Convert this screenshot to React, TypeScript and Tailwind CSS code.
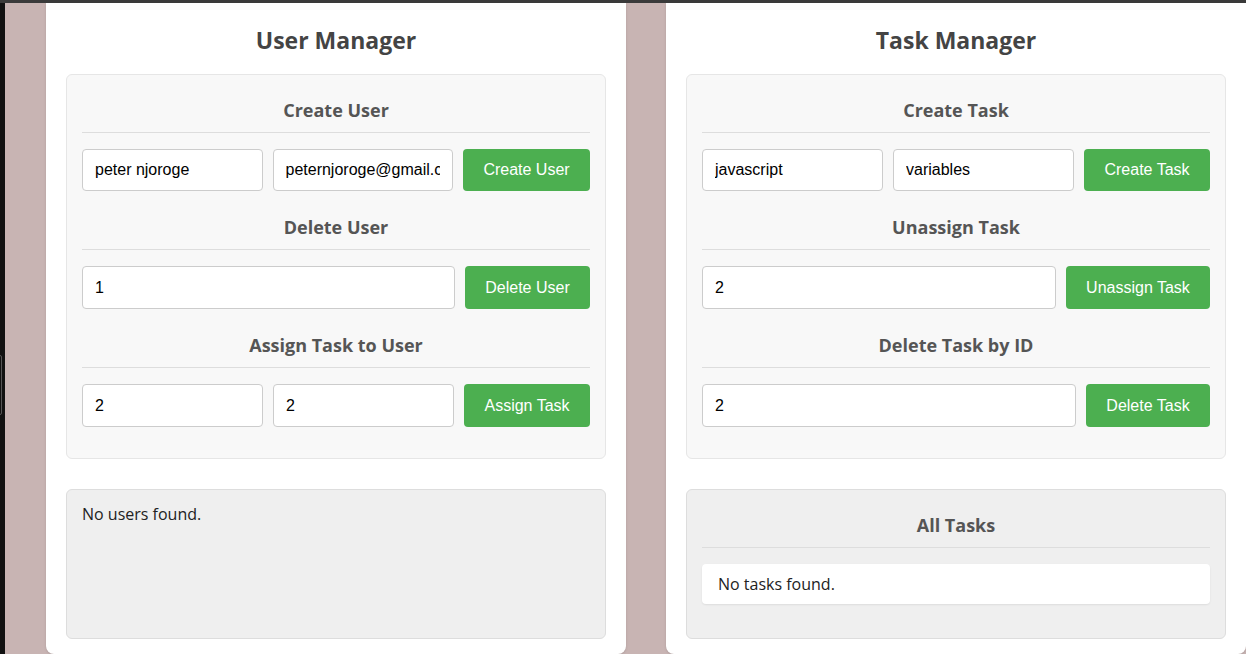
import React, { useState } from 'react';

const headingFont = "font-['Open_Sans','Noto_Sans',sans-serif]";

const inputClass =
  "min-w-0 flex-1 px-3 bg-white border border-[#ccc] rounded-[4px] text-[16px] leading-[18px] text-black outline-none";
const buttonClass =
  "shrink-0 px-5 bg-[#4caf50] text-white text-[16px] rounded-[4px]";

const SectionTitle: React.FC<{ children: React.ReactNode }> = ({ children }) => (
  <h3 className={`pt-2 mb-4 pb-[10px] border-b border-[#ddd] text-center text-[18px] leading-6 font-bold text-[#555] ${headingFont}`}>
    {children}
  </h3>
);

const Section: React.FC<{ title: string; children: React.ReactNode }> = ({ title, children }) => (
  <div className="pb-4 last:pb-0">
    <SectionTitle>{title}</SectionTitle>
    <div className="flex gap-[10px] items-stretch">{children}</div>
  </div>
);

const Card: React.FC<{ title: string; children: React.ReactNode }> = ({ title, children }) => (
  <div className="w-[580px] shrink-0 bg-white rounded-b-[8px] pt-[21px] px-5 pb-[15px] shadow-sm">
    <h2 className={`text-center text-[23px] leading-8 font-bold text-[#444] mb-[18px] ${headingFont}`}>
      {title}
    </h2>
    {children}
  </div>
);

const App: React.FC = () => {
  const [userName, setUserName] = useState('peter njoroge');
  const [userEmail, setUserEmail] = useState('peternjoroge@gmail.com');
  const [deleteUserId, setDeleteUserId] = useState('1');
  const [assignUserId, setAssignUserId] = useState('2');
  const [assignTaskId, setAssignTaskId] = useState('2');
  const [taskTitle, setTaskTitle] = useState('javascript');
  const [taskDesc, setTaskDesc] = useState('variables');
  const [unassignId, setUnassignId] = useState('2');
  const [deleteTaskId, setDeleteTaskId] = useState('2');

  return (
    <div className="h-screen flex flex-col overflow-hidden font-['Liberation_Sans',Arial,sans-serif]">
      <div className="h-[3px] bg-[#3a3a3a] shrink-0" />
      <div className="flex flex-1 min-h-0">
        <div className="relative w-[5px] bg-[#111] shrink-0">
          <div className="absolute left-[-2px] top-[352px] w-[4px] h-[60px] rounded-[3px] border border-[#555]" />
        </div>
        <div className="flex-1 bg-[#c8b4b3] pl-[41px] flex gap-10 items-start overflow-hidden">
          <Card title="User Manager">
            <div className="bg-[#f8f8f8] border border-[#e6e6e6] rounded-[6px] p-[15px] pb-[31px]">
              <Section title="Create User">
                <input className={`${inputClass} h-[42px]`} value={userName} onChange={e => setUserName(e.target.value)} />
                <input className={`${inputClass} h-[42px]`} value={userEmail} onChange={e => setUserEmail(e.target.value)} />
                <button className={`${buttonClass} w-[127px]`}>Create User</button>
              </Section>
              <Section title="Delete User">
                <input className={`${inputClass} h-[43px]`} value={deleteUserId} onChange={e => setDeleteUserId(e.target.value)} />
                <button className={`${buttonClass} w-[125px]`}>Delete User</button>
              </Section>
              <Section title="Assign Task to User">
                <input className={`${inputClass} h-[43px]`} value={assignUserId} onChange={e => setAssignUserId(e.target.value)} />
                <input className={`${inputClass} h-[43px]`} value={assignTaskId} onChange={e => setAssignTaskId(e.target.value)} />
                <button className={`${buttonClass} w-[126px]`}>Assign Task</button>
              </Section>
            </div>
            <div className="mt-[30px] h-[150px] bg-[#efefef] border border-[#ddd] rounded-[6px] p-[15px]">
              <p className={`text-[16px] leading-[18px] text-[#222] ${headingFont}`}>No users found.</p>
            </div>
          </Card>

          <Card title="Task Manager">
            <div className="bg-[#f8f8f8] border border-[#e6e6e6] rounded-[6px] p-[15px] pb-[31px]">
              <Section title="Create Task">
                <input className={`${inputClass} h-[42px]`} value={taskTitle} onChange={e => setTaskTitle(e.target.value)} />
                <input className={`${inputClass} h-[42px]`} value={taskDesc} onChange={e => setTaskDesc(e.target.value)} />
                <button className={`${buttonClass} w-[126px]`}>Create Task</button>
              </Section>
              <Section title="Unassign Task">
                <input className={`${inputClass} h-[43px]`} value={unassignId} onChange={e => setUnassignId(e.target.value)} />
                <button className={`${buttonClass} w-[144px]`}>Unassign Task</button>
              </Section>
              <Section title="Delete Task by ID">
                <input className={`${inputClass} h-[43px]`} value={deleteTaskId} onChange={e => setDeleteTaskId(e.target.value)} />
                <button className={`${buttonClass} w-[124px]`}>Delete Task</button>
              </Section>
            </div>
            <div className="mt-[30px] h-[150px] bg-[#efefef] border border-[#ddd] rounded-[6px] px-[15px] pt-[15px]">
              <SectionTitle>All Tasks</SectionTitle>
              <div className="bg-white rounded-[4px] shadow-[0_1px_2px_rgba(0,0,0,0.08)] px-4 py-[11px]">
                <p className={`text-[16px] leading-[18px] text-[#222] ${headingFont}`}>No tasks found.</p>
              </div>
            </div>
          </Card>
        </div>
      </div>
    </div>
  );
};

export default App;
